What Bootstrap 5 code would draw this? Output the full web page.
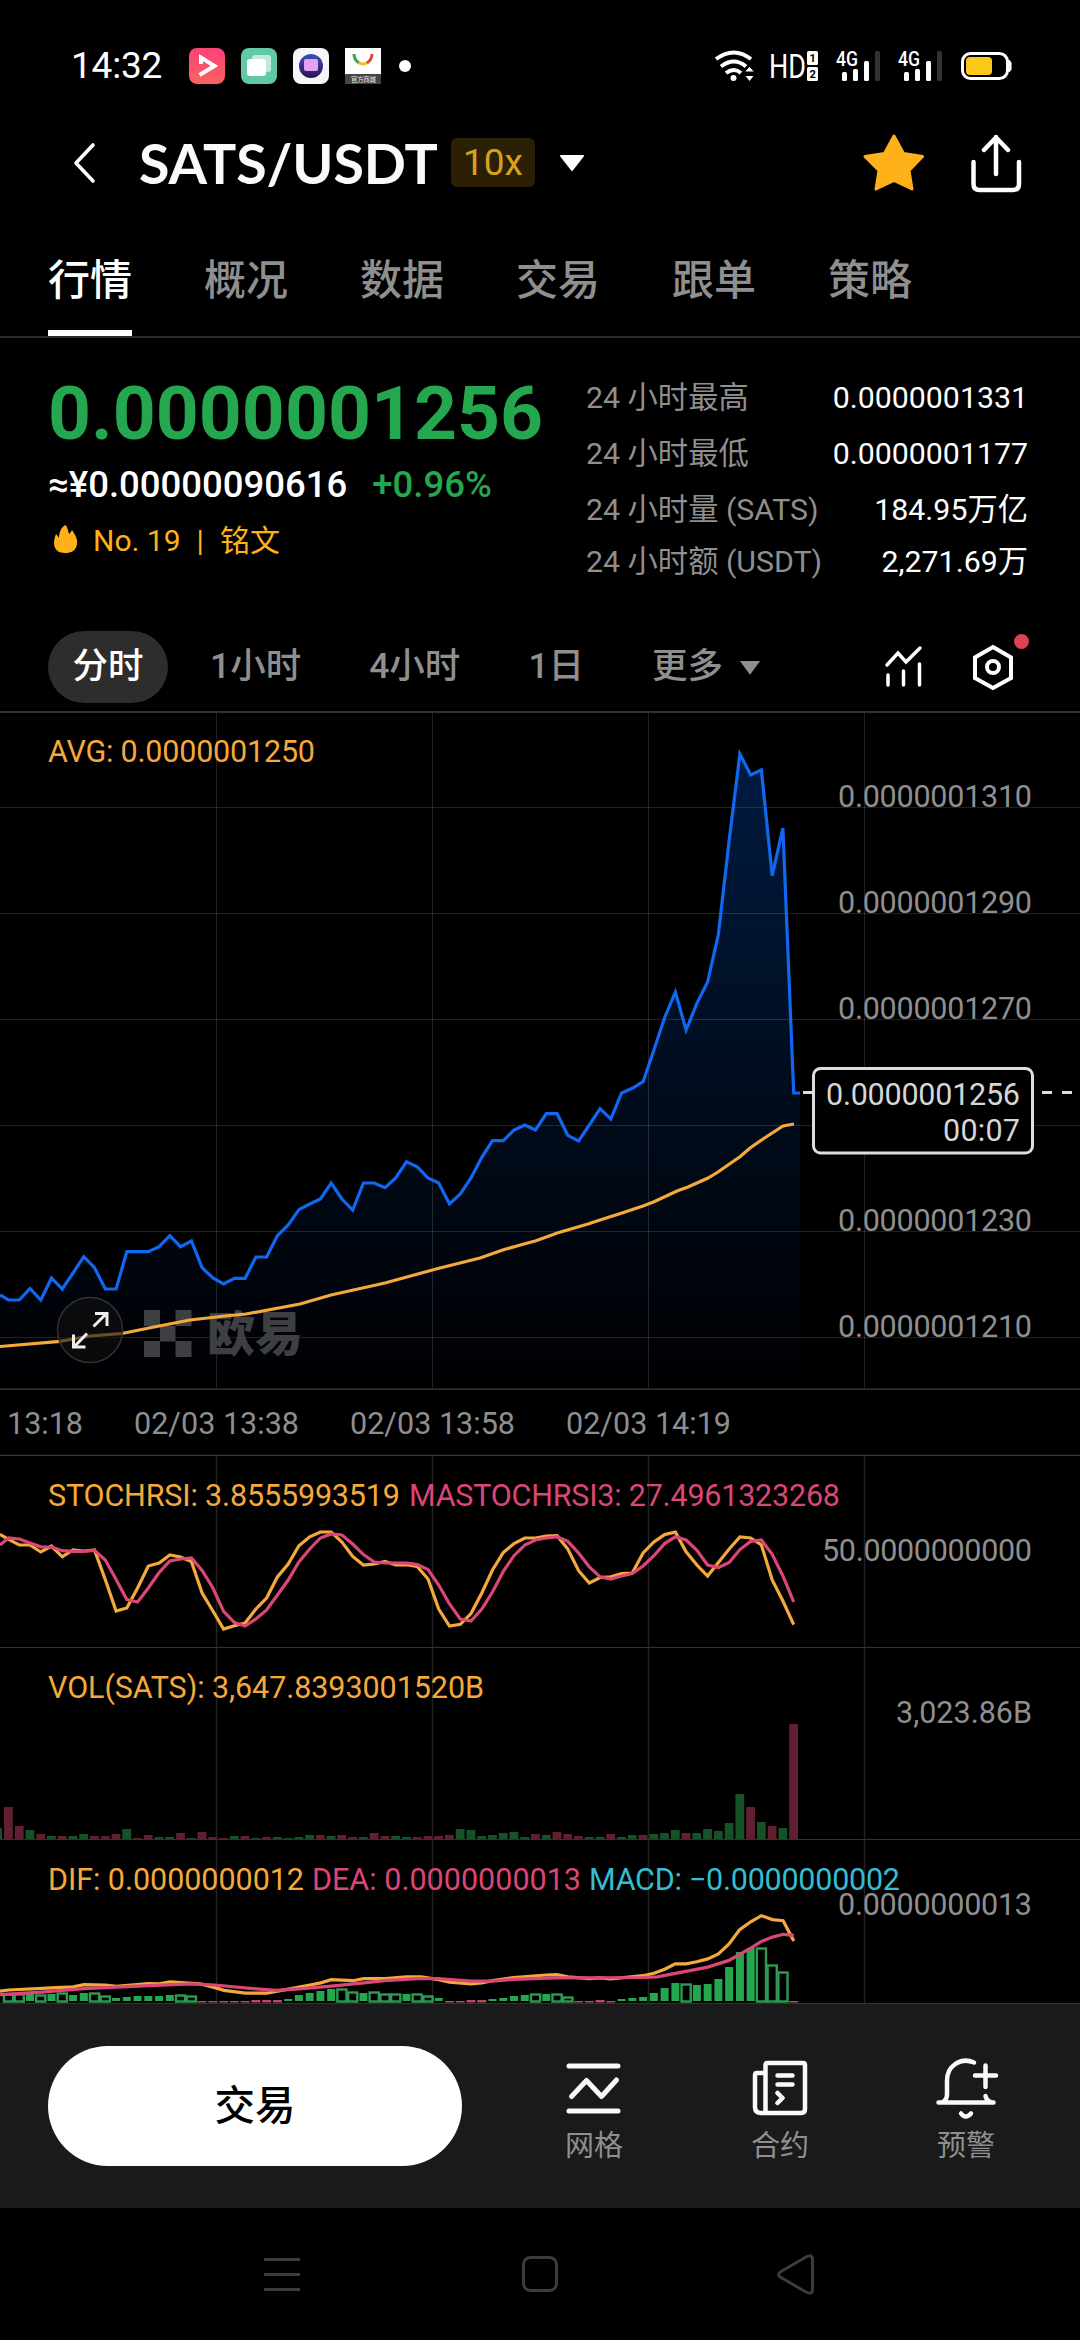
<!DOCTYPE html>
<html lang="zh-CN">
<head>
<meta charset="utf-8">
<meta name="viewport" content="width=device-width, initial-scale=1">
<title>SATS/USDT</title>
<link href="https://cdn.jsdelivr.net/npm/bootstrap@5.3.0/dist/css/bootstrap.min.css" rel="stylesheet">
<style>
:root{--up:#25a750;--amber:#f5a93b;--rose:#dc4676;--dim:#8f8f8f}
body{width:1080px;height:2340px;background:#000;color:#fff;font-family:Roboto,"Noto Sans CJK SC",sans-serif;overflow:hidden}
svg{display:block;flex:none;overflow:visible}
svg.panel{overflow:hidden}
.status{height:132px;padding:0 68px 0 71px}
.clock{font-size:37px;letter-spacing:-.2px;line-height:40px;width:118px}
.titlebar{height:61px;padding:0 57px 0 73px}
.pair{font-family:Lato,sans-serif;font-size:55.5px;font-weight:700;line-height:60px;letter-spacing:-.1px;color:#fafafa;width:312px;margin-left:43px}
.lever{width:84px;height:49px;border-radius:6px;background:#2b1f06;color:#d9a11b;font-size:37px;line-height:50px}
.tabs{height:145px;padding:0 48px;gap:72px;border-bottom:2px solid #2b2b2b}
.tabs .nav-link{padding:0;font-size:42px;line-height:60px;font-weight:500;color:var(--dim);padding-top:58px;height:143px;border:0;border-radius:0}
.tabs .nav-link.active{color:#fff;border-bottom:6px solid #fff}
.quote{height:293px;padding:30px 52px 0 48px}
.last{font-size:75px;font-weight:700;line-height:90px;color:var(--up)}
.fiat{font-size:36.5px;line-height:44px;font-weight:500;margin-top:5px;gap:25px}
.rank{font-size:30px;line-height:44px;color:#ffb11a;margin-top:12px}
.flame{margin:0 13px 4px 0}
.stat{font-size:30.3px;line-height:44px;margin-bottom:12px}
.stat .k{color:var(--dim)}
.stats{width:442px;padding-top:8px}
.frames{height:80px;padding:0 50px 8px 48px;font-size:35.5px;color:var(--dim);font-weight:500}
.frames .step{margin-right:68px}
.pill{width:120px;height:72px;border-radius:36px;background:#2d2d2d;color:#fff;margin-right:42px}
.dock{height:204px;background:#1a1a1a;padding:0 48px}
.trade{width:414px;height:120px;border-radius:60px;background:#fff;color:#000;font-size:40.5px;font-weight:500;margin-right:6px}
.act{width:120px;margin-left:66px;padding-top:10px;font-size:29px;line-height:40px;color:var(--dim)}
.act svg{margin-bottom:4px}
.grid{stroke:#222;stroke-width:1.5}
.rule{stroke:#333;stroke-width:2}
.axis{fill:var(--dim)}
svg text{font-size:30.5px}
.lnw{fill:none;stroke-width:3.2;stroke-linejoin:miter}
</style>
</head>
<body class="d-flex flex-column">
<header>
<div class="status d-flex align-items-center justify-content-between">
 <div class="d-flex align-items-center">
  <span class="clock">14:32</span>
  <svg width="222" height="36" viewBox="189 48 222 36">
   <defs><linearGradient id="pk" x2="0" y2="1"><stop stop-color="#fb4278"/><stop offset="1" stop-color="#fb6260"/></linearGradient>
   <linearGradient id="vi" x2="0" y2="1"><stop stop-color="#3b50b8"/><stop offset="1" stop-color="#2a1550"/></linearGradient></defs>
   <rect x="189" y="48" width="36" height="36" rx="8" fill="url(#pk)"/>
   <path d="M201 64v-6.500l13.500 8.500L199.500 75" fill="none" stroke="#fff" stroke-width="4"/>
   <rect x="241" y="48" width="36" height="36" rx="8" fill="#62c9a5"/><rect x="252" y="55" width="19" height="17" rx="3" fill="#bfeadb"/><rect x="247" y="59" width="19" height="17" rx="3" fill="#fff"/>
   <rect x="293" y="48" width="36" height="36" rx="8" fill="#f5f5fa"/><circle cx="311" cy="66" r="12" fill="url(#vi)"/><rect x="304" y="59" width="14" height="12" rx="2" fill="#e3a2f2"/>
   <rect x="345" y="48" width="36" height="36" fill="#fff"/><rect x="345" y="74" width="36" height="10" fill="#454545"/>
   <g fill="none" stroke-width="3"><path d="M354 54c0 4 2 7 5 9" stroke="#37a852"/><path d="M358.500 62.500c3 2 6 2 9 0" stroke="#f5b921"/><path d="M367 63c3-2 5-5 5-9" stroke="#e34a3f"/></g>
   <text x="351" y="82" style="font-size:6.500px" textLength="25" fill="#eee">官方商城</text>
   <circle cx="405" cy="66" r="6" fill="#fff"/>
  </svg>
 </div>
 <svg width="298" height="32" viewBox="714 50 298 32">
  <g fill="none" stroke="#fff" stroke-width="4"><path d="M716 59q18-13 35 0"/><path d="M721 66.500q13-10 25 0"/><path d="M726 73q8-6 15 0"/></g>
  <circle cx="733.500" cy="78" r="3" fill="#fff"/><path d="M749.500 66l5 6h-10zM749.500 81.500l5-6h-10z" fill="#fff" stroke="#000" stroke-width="1"/>
  <text x="769" y="77.500" style="font-size:34px" textLength="37" lengthAdjust="spacingAndGlyphs" fill="#fff">HD</text>
  <rect x="807" y="51" width="11" height="14" rx="1.500" fill="#fff"/><rect x="807" y="67" width="11" height="14" rx="1.500" fill="#fff"/>
  <text x="809.500" y="62" style="font-size:11px;font-weight:700" fill="#000">1</text><text x="809.500" y="78" style="font-size:11px;font-weight:700" fill="#000">2</text>
  <text x="836" y="65.500" style="font-size:19.500px;font-weight:500" textLength="22" lengthAdjust="spacingAndGlyphs" fill="#fff">4G</text>
  <text x="898" y="65.500" style="font-size:19.500px;font-weight:500" textLength="22" lengthAdjust="spacingAndGlyphs" fill="#fff">4G</text>
  <g id="sig" fill="#fff"><rect x="842" y="72" width="5" height="9" rx="1.500"/><rect x="853" y="69" width="5" height="12" rx="1.500"/><rect x="864" y="61" width="5" height="20" rx="1.500"/><rect x="875" y="51" width="5" height="30" rx="1.500" fill="#333"/></g>
  <use href="#sig" x="62"/>
  <rect x="962.500" y="53.500" width="45" height="25" rx="8" fill="none" stroke="#fff" stroke-width="3"/><path d="M1009 60q3 2 2 6 1 4-2 6z" fill="#fff" stroke="#fff"/>
  <rect x="966" y="57" width="26" height="18" rx="4" fill="#fdc918"/>
 </svg>
</div>
<div class="titlebar d-flex align-items-center">
 <svg width="23" height="42" viewBox="0 0 23 42"><path d="M20 3L3 21l17 18" fill="none" stroke="#fff" stroke-width="3.600" stroke-linecap="round" stroke-linejoin="round"/></svg>
 <span class="pair">SATS/USDT</span>
 <span class="lever text-center">10x</span>
 <svg class="ms-4" width="26" height="18" viewBox="0 0 26 18"><path d="M2 2h22L13 16z" fill="#fff" stroke="#fff" stroke-width="2" stroke-linejoin="round"/></svg>
 <svg class="ms-auto" width="160" height="61" viewBox="863 132 160 61">
  <path d="M894 136l9.500 17.500 19 3-13.500 14 3 18.500-18-8.500-18 8.500 3-18.500-14-14 19.500-3z" fill="#ffb11a" stroke="#ffb11a" stroke-width="3" stroke-linejoin="round"/>
  <path d="M973.500 162v22q0 6 6 6h33.500q6 0 6-6v-22M996 174v-37M984 150l12-12.500 12 12.500" fill="none" stroke="#fff" stroke-width="4.500" stroke-linecap="round" stroke-linejoin="round"/>
 </svg>
</div>
<nav class="nav tabs flex-nowrap">
 <a class="nav-link active">行情</a><a class="nav-link">概况</a><a class="nav-link">数据</a><a class="nav-link">交易</a><a class="nav-link">跟单</a><a class="nav-link">策略</a>
</nav>
</header>
<main>
<section class="quote d-flex justify-content-between">
 <div>
  <div class="last">0.0000001256</div>
  <div class="fiat d-flex"><span>≈¥0.00000090616</span><span style="color:var(--up)">+0.96%</span></div>
  <div class="rank d-flex align-items-center">
   <svg class="flame" width="32" height="32" viewBox="0 0 32 32"><path d="M17 2c3 2 3 6 4 9 1-1 2-2 3-4 3 5 6 9 5 14-1 7-6 9-12 9S6 27 6 20c0-4 1-6 2-9 1 1 2 2 3 4 0-6 2-10 6-13z" fill="#ffb11a"/></svg>
   <span>No. 19</span><span class="mx-3">|</span><span>铭文</span>
  </div>
 </div>
 <div class="stats">
  <div class="stat d-flex justify-content-between"><span class="k">24 小时最高</span><span>0.0000001331</span></div>
  <div class="stat d-flex justify-content-between"><span class="k">24 小时最低</span><span>0.0000001177</span></div>
  <div class="stat d-flex justify-content-between mb-2"><span class="k">24 小时量 (SATS)</span><span>184.95万亿</span></div>
  <div class="stat d-flex justify-content-between"><span class="k">24 小时额 (USDT)</span><span>2,271.69万</span></div>
 </div>
</section>
<section class="frames d-flex align-items-center">
 <span class="pill d-flex align-items-center justify-content-center">分时</span>
 <span class="step">1小时</span><span class="step">4小时</span><span class="step">1日</span><span class="me-3">更多</span>
 <svg width="22" height="15" viewBox="0 0 24 16"><path d="M1 1h22L12 16z" fill="#8f8f8f"/></svg>
 <svg class="ms-auto" width="146" height="60" viewBox="884 637 146 60">
  <g fill="none" stroke="#fff" stroke-width="3.500" stroke-linecap="round"><path d="M887 665l11-12 8 9 14-14M888 675v10M903.500 671v14M919.500 664v21"/><path d="M993 647l18 10.500v20.500l-18 10-18-10v-20.500z" stroke-width="4"/><circle cx="993" cy="667" r="6" stroke-width="4"/></g>
  <circle cx="1021.500" cy="641.500" r="7.500" fill="#db4453"/>
 </svg>
</section>

<svg class="panel" width="1080" height="679" viewBox="0 711 1080 679">
 <defs><linearGradient id="fade" gradientUnits="userSpaceOnUse" x1="0" y1="750" x2="0" y2="1389"><stop stop-color="#001b42"/><stop offset=".5" stop-color="#000d1f"/><stop offset="1" stop-color="#000002"/></linearGradient></defs>
 <path id="area" fill="url(#fade)"/>
 <path d="M0 807.500H1080M0 913.500H1080M0 1019.500H1080M0 1125.500H1080M0 1231.500H1080M0 1337.500H1080M216.500 712V1390M432.500 712V1390M648.500 712V1390M864.500 712V1390" stroke="#fff" stroke-opacity=".13" stroke-width="1"/>
 <path class="rule" d="M0 712H1080M0 1389.500H1080"/>
 <g fill="#3e3f42"><path d="M144 1310h16v16h-16zM175.500 1310h16v16h-16zM160 1326h15.500v15.500h-15.500zM144 1341h16v16h-16zM175.500 1341h16v16h-16z"/><text x="207" y="1351" style="font-size:48px;font-weight:900" textLength="96">欧易</text></g>
 <path class="lnw" stroke="#f5a93b" d="M0 1346.500L60 1341.300 90 1336 122 1333.500 149 1328 190 1320 225 1316 246 1314 300 1304 331 1295 385 1283 438 1268.500 480 1258 502.700 1250 524 1244 536 1240.700 558 1232.700 588 1224 600 1220 622 1213 643 1206 654 1201.700 677 1191 688 1187 708 1178 718 1172 728 1165 740 1156.700 750 1148 763 1139 783 1126 794 1124"/>
 <path id="spot" class="lnw" stroke="#0f68ef"/>
 <circle cx="90" cy="1330" r="32.500" fill="#101010" fill-opacity=".6" stroke="#333" stroke-width="1.500"/>
 <path d="M93.500 1326.500L107 1313M95 1313.500h12v12.500M87 1333.500L74 1347M73.500 1334.500v12.500h12" fill="none" stroke="#eee" stroke-width="3"/>
 <text x="48" y="762" fill="#f5a93b" textLength="267">AVG: 0.0000001250</text>
 <g class="axis"><text x="838" y="807" textLength="194">0.0000001310</text><text x="838" y="913" textLength="194">0.0000001290</text><text x="838" y="1019" textLength="194">0.0000001270</text><text x="838" y="1231" textLength="194">0.0000001230</text><text x="838" y="1337" textLength="194">0.0000001210</text></g>
 <path d="M803 1092.500h10M1042 1092.500h10M1062 1092.500h10" stroke="#ddd" stroke-width="3"/>
 <rect x="813.500" y="1068.500" width="219" height="84.500" rx="7" fill="#000" stroke="#dedede" stroke-width="3"/>
 <g fill="#d6d6d6"><text x="826" y="1105" textLength="194">0.0000001256</text><text x="943" y="1141" textLength="77">00:07</text></g>
</svg>
<svg class="panel" width="1080" height="66" viewBox="0 1390 1080 66"><g class="axis"><text x="7" y="1434" textLength="76">13:18</text><text x="134" y="1434" textLength="165">02/03 13:38</text><text x="350" y="1434" textLength="165">02/03 13:58</text><text x="566" y="1434" textLength="165">02/03 14:19</text></g><path class="rule" d="M0 1455.500H1080" style="stroke-width:1.500"/></svg>
<svg class="panel" width="1080" height="192" viewBox="0 1456 1080 192">
 <path class="grid" d="M216.500 1456V1648M432.500 1456V1648M648.500 1456V1648M864.500 1456V1648"/><path class="rule" d="M0 1647.500H1080" style="stroke-width:1"/>
 <path id="k" class="lnw" stroke="#f5a93b"/><path id="d" class="lnw" stroke="#dc4676"/>
 <text x="48" y="1506" fill="#f5a93b" textLength="352">STOCHRSI: 3.8555993519</text><text x="409" y="1506" fill="#dc4676" textLength="431">MASTOCHRSI3: 27.4961323268</text>
 <text class="axis" x="822" y="1561" textLength="210">50.0000000000</text>
</svg>
<svg class="panel" width="1080" height="192" viewBox="0 1648 1080 192">
 <path class="grid" d="M216.500 1648V1840M432.500 1648V1840M648.500 1648V1840M864.500 1648V1840"/><path class="rule" d="M0 1839.500H1080" style="stroke-width:1"/>
 <g id="vol"></g>
 <text x="48" y="1698" fill="#f5a93b" textLength="436">VOL(SATS): 3,647.8393001520B</text>
 <text class="axis" x="896" y="1723" textLength="136">3,023.86B</text>
</svg>
<svg class="panel" width="1080" height="164" viewBox="0 1840 1080 164">
 <path class="grid" d="M216.500 1840V2003M432.500 1840V2003M648.500 1840V2003M864.500 1840V2003"/><path class="rule" d="M0 2003.500H1080" style="stroke-width:1"/>
 <g id="hist"></g><path id="dif" class="lnw" stroke="#f5a93b"/><path id="dea" class="lnw" stroke="#dc4676"/>
 <text x="48" y="1890" fill="#f5a93b" textLength="256">DIF: 0.0000000012</text><text x="312" y="1890" fill="#dc4676" textLength="269">DEA: 0.0000000013</text><text x="589" y="1890" fill="#35bdd0" textLength="311">MACD: −0.0000000002</text>
 <text class="axis" x="838" y="1915" textLength="194">0.0000000013</text>
</svg>
</main>
<footer>
<div class="dock d-flex align-items-center">
 <button class="trade btn p-0 border-0">交易</button>
 <div class="act d-flex flex-column align-items-center">
  <svg width="66" height="66" viewBox="561 2056 66 66"><path d="M569 2066h49M569 2111h49M571.500 2096.500l15-16 15 16 15-16.500" fill="none" stroke="#fafafa" stroke-width="5" stroke-linecap="round" stroke-linejoin="round"/></svg>网格</div>
 <div class="act d-flex flex-column align-items-center">
  <svg width="66" height="66" viewBox="747 2056 66 66"><g fill="none" stroke="#fafafa" stroke-width="4.500" stroke-linecap="round" stroke-linejoin="round"><path d="M765.500 2113V2065q0-2 2-2h35.500q2 0 2 2v44q0 4-4 4h-40q-6 0-6-6v-32q0-2 2-2h8M777.500 2075.500h15M777.500 2084.500h15M777.500 2093l5 5-5 5"/></g></svg>合约</div>
 <div class="act d-flex flex-column align-items-center">
  <svg width="66" height="66" viewBox="933 2056 66 66"><g fill="none" stroke="#fafafa" stroke-width="4.500" stroke-linecap="round" stroke-linejoin="round"><path d="M974 2062.500c-14-6-27 4-27 18v14q0 5-4 7.500M938.500 2102.500h55M985.500 2096q1 5 6 6.500M985.500 2065.500v21.500M975 2075.500h21M961 2113.500q4.500 6 10 0"/></g></svg>预警</div>
</div>
<div class="d-flex align-items-center justify-content-center">
 <svg width="1080" height="132" viewBox="0 2208 1080 132"><g fill="none" stroke="#3c3c3c" stroke-width="3"><path d="M264 2259.500h36M264 2274.500h36M264 2289.500h36"/><rect x="523.500" y="2257.500" width="33" height="33" rx="7"/><path d="M806 2257l-25 14.500q-5 3 0 6L806 2292q6 3 6.500-2v-31q-.5-5-6.500-2z"/></g></svg>
</div>
</footer>
<script src="https://cdn.jsdelivr.net/npm/bootstrap@5.3.0/dist/js/bootstrap.bundle.min.js"></script>
<script>
const X = i => 8.5 + 10.756 * i;
const el = id => document.getElementById(id);
const line = (y0, ys) => `M0 ${y0}` + ys.map((y, i) => `L${X(i).toFixed(1)} ${y}`).join('');
const spot = [1300,1300,1288.5,1300,1278,1289,1273,1256.7,1267.7,1289,1289,1251.7,1251.7,1251.7,1246.7,1235.7,1246.7,1241,1267.7,1278,1284,1278.3,1278.3,1257,1257,1235.7,1225,1209.7,1204,1199,1183,1199,1210,1183,1183,1187.7,1178,1161.7,1166.7,1178,1183,1204,1194,1178,1157.3,1140.7,1140.7,1130,1125,1130,1113.7,1113.7,1135.3,1141,1125,1108.7,1119,1093,1088.3,1081.7,1050,1017.7,992,1030,1003.3,982,934.3,840,754,775,770,875.7,828,1093];
el('spot').setAttribute('d', line(1295, spot) + 'H800');
el('area').setAttribute('d', line(1295, spot) + 'H800V1389H0Z');
const k = [1539.3,1545,1545,1552,1546,1556.8,1550,1551,1550,1579.6,1611,1608,1588,1566,1563,1555,1557,1561.4,1593,1611,1629,1625.7,1623,1609,1598,1577,1564,1545.7,1536.8,1532,1532,1542,1556.4,1565,1564,1561.4,1565,1564.6,1566.4,1579,1609,1626,1624.3,1613.6,1593,1570,1552.5,1543.6,1538,1538,1536,1535.7,1549,1570.7,1583,1577.5,1576.8,1573.6,1573,1553,1542,1534.6,1532,1551.8,1565,1576,1562.5,1549,1537,1538,1545,1580,1601,1624.6];
const d = [1538,1539,1543,1546.8,1547,1550.7,1551.4,1551.4,1550.4,1560,1579.6,1599.6,1602,1588,1572.5,1561,1559,1558,1570.4,1588,1611.4,1622.5,1626,1619,1610,1595,1580,1562,1549,1538,1534,1535,1544,1554.6,1562,1563,1563,1563.2,1564.6,1569.6,1585,1604,1619,1621,1609,1592,1571.4,1555.7,1545,1540,1538,1536.8,1541.4,1553,1566.8,1576.8,1579,1576,1573.6,1566,1555.7,1543.6,1536.8,1540,1550.4,1565,1567.5,1562.5,1549.6,1541.4,1540,1554.3,1576,1601.8];
el('k').setAttribute('d', line(1534.3, k));
el('d').setAttribute('d', line(1545, d));
const vol = 'g11 r32 r13 g9 r5 g3 r3 g3 g5 r3 r3 r5 g10 r1 r4 g2 g2 r6 g1 r7 r2 r1 g3 r3 g1 r2 g2 g1 g2 g4 r4 g3 r4 r2 g2 r6 r3 g3 g2 r2 r3 r3 r4 g10 g9 g3 g4 g6 g7 g2 r5 g4 r7 r5 r3 g2 g2 r5 g2 g4 r4 g5 g6 g9 r6 g6 g10 g8 g16 g45 r32 g17 r13 g11 r115'.split(' ');
el('vol').innerHTML = vol.map((v, i) => { const h = +v.slice(1); return `<rect x="${(X(i - 1) - 4.5).toFixed(1)}" y="${1839 - h}" width="8.8" height="${h}" fill="${v[0] == 'g' ? '#165128' : '#612031'}"/>`; }).join('');
/* f: solid bar, h: hollow bar, n: negative bar; the number is the top edge above the baseline */
const hist = 'h8 h8 f7 h7 f7 h9 f6 f8 h9 h6 f3 f4 f5 f5 f5 f6 h7 h6 n1 n1 n1 n1 n1 n2 n2 n2 f2 f6 f8 f10 f12 h13 h10 f8 h10 h8 h8 f7 h8 h6 f3 n1 n1 n2 n2 f2 f3 f5 f6 h8 f7 h8 h5 n1 n1 n2 n1 f2 f3 f4 f8 f13 f18 h18 f16 f17 f22 f34 f49 f53 h54 h37 h30 n1'.split(' ');
el('hist').innerHTML = hist.map((v, i) => { const t = v[0], h = +v.slice(1), x = X(i);
  if (t == 'f') return `<rect x="${x - 4}" y="${2001 - h}" width="8" height="${h}" fill="#25a750"/>`;
  if (t == 'h') return `<rect x="${x - 4.6}" y="${2001.5 - h + 1}" width="9.2" height="${h - 1}" fill="#000" stroke="#2f9a53" stroke-width="2.4"/>`;
  return `<rect x="${x - 4.5}" y="${2002 - h}" width="9" height="${h + .5}" fill="#b44a68"/>`; }).join('');
const free = (l, r) => 'M' + l.map(p => `${(p[0] / 2.8).toFixed(1)} ${(1460 + p[1] / 2.8).toFixed(1)}`).concat(r.map(p => `${(540 + p[0] / 2.904).toFixed(1)} ${(1460 + p[1] / 2.8).toFixed(1)}`)).join('L');
el('dif').setAttribute('d', free([[0,1487],[24,1484],[145,1478],[205,1475],[235,1469],[295,1470],[326,1474],[416,1466],[446,1467],[476,1461],[560,1467],[597,1476],[627,1485],[687,1493],[747,1493],[800,1483],[868,1470],[898,1464],[928,1455],[988,1458],[1018,1452],[1078,1452],[1138,1447],[1180,1447],[1228,1455],[1259,1462],[1318,1467],[1349,1464],[1379,1458],[1439,1449]], [[18,1442],[49,1441],[81,1447],[143,1452],[174,1450],[206,1453],[300,1444],[331,1437],[362,1426],[393,1411],[424,1411],[455,1405],[487,1397],[518,1383],[549,1355],[580,1315],[612,1293],[643,1276],[675,1287],[706,1290],[737,1347]]));
el('dea').setAttribute('d', free([[0,1497],[115,1490],[235,1480],[416,1472],[537,1467],[600,1470],[717,1481],[775,1485],[838,1481],[928,1473],[1018,1464],[1078,1458],[1168,1452],[1228,1452],[1318,1459],[1379,1459],[1439,1454]], [[18,1451],[49,1450],[300,1449],[340,1447],[424,1432],[487,1420],[549,1401],[612,1367],[643,1348],[675,1336],[706,1328],[737,1331]]));
</script>
</body>
</html>
